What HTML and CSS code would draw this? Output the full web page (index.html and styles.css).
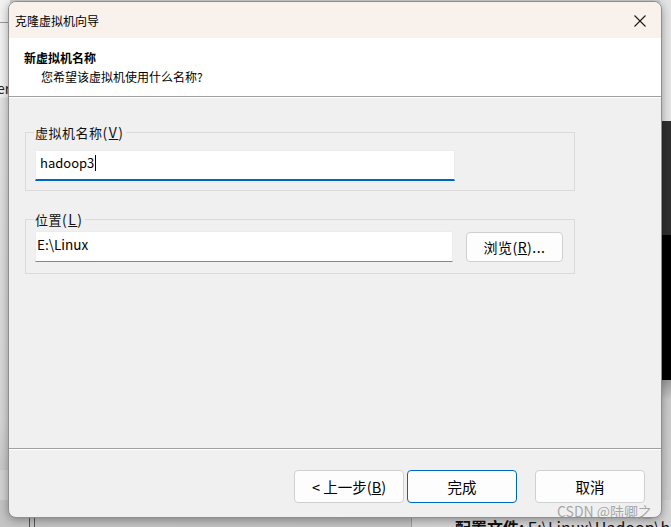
FILE: index.html
```html
<!DOCTYPE html>
<html lang="zh">
<head>
<meta charset="utf-8">
<title>克隆虚拟机向导</title>
<link rel="stylesheet" href="styles.css">
</head>
<body>
<div class="desk">
  <div class="desk-left"><div class="desk-line"></div><span class="desk-er">er</span></div>
  <div class="desk-right">
    <div class="dr-a"></div><div class="dr-b"></div><div class="dr-c"></div><div class="dr-d"></div>
  </div>
  <div class="desk-bottom">
    <div class="vl vl1"></div><div class="vl vl2"></div><div class="vl vl3"></div>
    <div class="cfg"><b>配置文件:</b> E:\Linux\Hadoop\ha</div>
  </div>
</div>

<div class="dialog">
  <div class="titlebar">
    <span class="title">克隆虚拟机向导</span>
    <svg class="close" width="12" height="12" viewBox="0 0 12 12"><path d="M0.5 0.5 L11.5 11.5 M11.5 0.5 L0.5 11.5" stroke="#1a1a1a" stroke-width="1.1" fill="none"/></svg>
  </div>
  <div class="header">
    <div class="h-title">新虚拟机名称</div>
    <div class="h-sub">您希望该虚拟机使用什么名称?</div>
  </div>
  <div class="main">
    <fieldset class="group g1">
      <legend>虚拟机名称<span class="key">(<u>V</u>)</span></legend>
      <div class="field focused"><span>hadoop3</span><span class="caret"></span></div>
    </fieldset>
    <fieldset class="group g2">
      <legend>位置<span class="key">(<u>L</u>)</span></legend>
      <div class="row">
        <div class="field plain"><span>E:\Linux</span></div>
        <button class="btn browse">浏览(<u>R</u>)...</button>
      </div>
    </fieldset>
  </div>
  <div class="footer">
    <button class="btn">&lt; 上一步(<u>B</u>)</button>
    <button class="btn primary">完成</button>
    <button class="btn cancel">取消</button>
  </div>
</div>

<div class="watermark">CSDN @陆卿之</div>
</body>
</html>
```
FILE: styles.css
```css
html, body {
  margin: 0;
  padding: 0;
  width: 671px;
  height: 527px;
  overflow: hidden;
}
body {
  position: relative;
  background: #d2d2d2;
  font-family: "Noto Sans CJK SC", "Liberation Sans", sans-serif;
  color: #000;
}

/* desktop fragments behind the window */
.desk-left {
  position: absolute;
  left: 0; top: 0;
  width: 10px; height: 470px;
  background: linear-gradient(#f2f2f2 0, #f2f2f2 97px, #e2e2e2 98px, #d6d6d6 420px, #c8c8c8 470px);
}
.desk-line { position: absolute; left: 0; top: 22px; width: 10px; height: 1px; background: #9a9a9a; }
.desk-er { position: absolute; left: -3px; top: 80px; font-size: 14px; line-height: 16px; color: #222; }
.desk-right {
  position: absolute;
  left: 660px; top: 0;
  width: 11px; height: 527px;
  display: flex; flex-direction: column;
}
.dr-a { height: 121px; background: #e4e4e4; }
.dr-b { height: 114px; background: #2e2e2e; }
.dr-c { height: 145px; background: #000; }
.dr-d { flex: 1; background: linear-gradient(#9a9a9a, #cacaca 20px, #d0d0d0); }
.desk-bottom {
  position: absolute;
  left: 0; top: 500px;
  width: 671px; height: 27px;
  background: linear-gradient(90deg, #c4c4c4 0, #c2c2c2 410px, #d3d3d3 412px, #d6d6d6 100%);
}
.vl { position: absolute; top: 0; width: 1px; height: 27px; background: #555; }
.vl1 { left: 29px; }
.vl2 { left: 34px; }
.vl3 { left: 411px; background: #9c9c9c; }
.cfg {
  position: absolute;
  left: 455px; top: 17px;
  font-size: 16px; line-height: 20px;
  white-space: nowrap;
  color: #111;
}

/* dialog window */
.dialog {
  position: absolute;
  left: 8px; top: 1px;
  width: 654px; height: 517px;
  box-sizing: border-box;
  border: 1px solid #8e8e8e;
  border-radius: 8px;
  overflow: hidden;
  background: #f0f0f0;
  box-shadow: 0 2px 10px rgba(0,0,0,0.35);
  display: flex;
  flex-direction: column;
}
.titlebar {
  height: 36px;
  flex: none;
  background: #f9f1eb;
  display: flex;
  align-items: center;
  justify-content: space-between;
  padding: 0 15px 0 6px;
}
.title { font-size: 12px; line-height: 16px; margin-top: 1px; }
.close { display: block; margin-top: 1px; }

.header {
  height: 58px;
  flex: none;
  background: #fff;
  border-bottom: 1px solid #a0a0a0;
  box-shadow: 0 1px 0 #fff;
  box-sizing: content-box;
  padding: 0 0 0 15px;
}
.h-title { font-size: 12px; font-weight: bold; line-height: 16px; margin-top: 12px; }
.h-sub { font-size: 12px; line-height: 16px; margin: 3px 0 0 17px; }

.main {
  flex: 1;
  padding: 27px 0 0 16px;
}
.group {
  margin: 0;
  width: 550px;
  box-sizing: border-box;
  border: 1px solid #dadada;
  padding: 0 0 9px 9px;
}
.group legend {
  font-size: 13px;
  line-height: 16px;
  padding: 0 1px;
  margin-left: -1px;
  color: #111;
  letter-spacing: 0.5px;
}
.group legend .key { font-size: 14px; letter-spacing: 1.5px; }
.g1 .field { margin-top: 9px; }
.g2 { margin-top: 20px; padding-bottom: 11px; }
.g2 .row { margin-top: 3px; display: flex; align-items: flex-start; gap: 13px; }

.field {
  width: 420px;
  height: 31px;
  box-sizing: border-box;
  background: #fff;
  border: 1px solid #ececec;
  display: flex;
  align-items: center;
  padding-bottom: 5px;
  font-size: 13px;
  color: #000;
}
.field.focused { border-bottom: 2px solid #0067c0; padding-left: 4px; }
.field.plain { width: 418px; border-bottom: 1px solid #868686; padding-left: 1px; padding-bottom: 6px; font-size: 13.5px; }
.caret { display: inline-block; width: 1px; height: 16px; background: #000; margin-left: 1px; }

.btn {
  font-family: inherit;
  font-size: 14px;
  color: #000;
  background: #fdfdfd;
  border: 1px solid #d0d0d0;
  border-radius: 4px;
  width: 110px;
  height: 32px;
  padding: 0;
  margin: 0;
}
.btn u { text-decoration: underline; }
.browse { width: 97px; height: 30px; letter-spacing: 0.5px; margin-top: 1px; }

.footer {
  height: 69px;
  flex: none;
  border-top: 1px solid #a0a0a0;
  box-shadow: inset 0 1px 0 #fff;
  display: flex;
  justify-content: flex-end;
  align-items: flex-start;
  padding: 21px 16px 0 0;
  gap: 3px;
  box-sizing: border-box;
}
.footer .btn { font-size: 14.5px; height: 33px; }
.primary { border-color: #0067c0; }
.cancel { margin-left: 15px; }

.watermark {
  position: absolute;
  left: 557px; top: 502px;
  font-size: 14px;
  line-height: 18px;
  color: rgba(140,140,140,0.75);
  white-space: nowrap;
}
```
